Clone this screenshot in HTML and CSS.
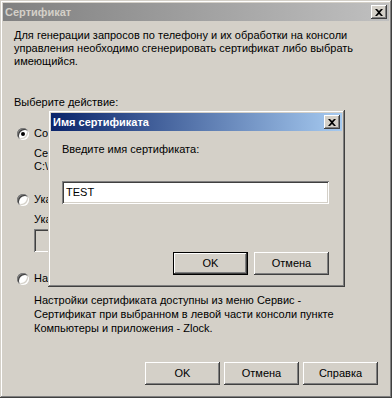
FILE: index.html
```html
<!DOCTYPE html>
<html lang="ru">
  <head>
    <meta charset="UTF-8" />
    <title>Сертификат</title>
    <link rel="stylesheet" href="styles.css">
  </head>
  <body>
    <div class="window">
      <div class="titlebar inactive">
        <span class="title">Сертификат</span>
        <span class="close-btn" aria-label="Закрыть">
          <svg width="8" height="7" viewBox="0 0 8 7"><path d="M0 0h2l2 2 2-2h2L5 3.5 8 7H6L4 5 2 7H0l3-3.5z" fill="#000"/></svg>
        </span>
      </div>
      <div class="content">
        <p class="intro">Для генерации запросов по телефону и их обработки на консоли<br>управления необходимо сгенерировать сертификат либо выбрать<br>имеющийся.</p>
        <p class="prompt">Выберите действие:</p>

        <div class="option">
          <div class="radio-row"><span class="radio checked"></span>Создать новый сертификат</div>
          <div class="option-body">
            Сертификат будет сохранён в файл<br>C:\WINDOWS\system32\zlock.cer
          </div>
        </div>

        <div class="option">
          <div class="radio-row"><span class="radio"></span>Указать существующий сертификат</div>
          <div class="option-body">
            Укажите путь к файлу сертификата:
            <div class="field disabled"></div>
          </div>
        </div>

        <div class="option last">
          <div class="radio-row"><span class="radio"></span>Настроить сертификат позже</div>
          <div class="option-body">
            Настройки сертификата доступны из меню Сервис -<br>Сертификат при выбранном в левой части консоли пункте<br>Компьютеры и приложения - Zlock.
          </div>
        </div>
      </div>
      <div class="buttons">
        <span class="btn">OK</span>
        <span class="btn">Отмена</span>
        <span class="btn">Справка</span>
      </div>

      <!-- модальное окно поверх -->
      <div class="dialog">
        <div class="titlebar active">
          <span class="title">Имя сертификата</span>
          <span class="close-btn" aria-label="Закрыть">
            <svg width="8" height="7" viewBox="0 0 8 7"><path d="M0 0h2l2 2 2-2h2L5 3.5 8 7H6L4 5 2 7H0l3-3.5z" fill="#000"/></svg>
          </span>
        </div>
        <div class="dialog-body">
          <div class="label">Введите имя сертификата:</div>
          <div class="field">TEST</div>
          <div class="buttons">
            <span class="btn default">OK</span>
            <span class="btn">Отмена</span>
          </div>
        </div>
      </div>
    </div>
  </body>
</html>
```

FILE: styles.css
```css
html,
body {
  margin: 0;
  background: #d4d0c8;
}

body {
  font-family: "Liberation Sans", Arial, sans-serif;
  font-size: 11px;
  line-height: 13px;
  color: #000;
}

/* классическая рамка окна */
.window,
.dialog {
  background: #d4d0c8;
  box-sizing: border-box;
  padding: 3px;
  box-shadow:
    inset -1px -1px #404040,
    inset 1px 1px #d4d0c8,
    inset -2px -2px #808080,
    inset 2px 2px #ffffff;
  display: flex;
  flex-direction: column;
}

.window {
  width: 392px;
  height: 398px;
  position: relative;
}

.titlebar {
  height: 18px;
  display: flex;
  align-items: center;
  justify-content: space-between;
  padding: 0 2px 0 2px;
  font-weight: bold;
  flex-shrink: 0;
}

.titlebar.inactive {
  background: linear-gradient(to right, #808080, #c0c0c0);
  color: #d4d0c8;
}

.titlebar.active {
  background: linear-gradient(to right, #0a246a, #a6caf0);
  color: #ffffff;
}

.close-btn {
  width: 16px;
  height: 14px;
  box-sizing: border-box;
  background: #d4d0c8;
  display: flex;
  align-items: center;
  justify-content: center;
  box-shadow:
    inset -1px -1px #404040,
    inset 1px 1px #ffffff,
    inset -2px -2px #808080;
}

.content {
  flex: 1;
  padding: 8px 11px 0 11px;
}

p {
  margin: 0;
}

.intro {
  margin-bottom: 28px;
}

.prompt {
  margin-bottom: 18px;
}

.radio-row {
  display: flex;
  align-items: center;
  gap: 5px;
  padding-left: 3px;
}

.radio {
  width: 12px;
  height: 12px;
  border-radius: 50%;
  background: #ffffff;
  box-shadow:
    inset 1px 1px #808080,
    inset -1px -1px #ffffff,
    inset 2px 2px #404040,
    inset -2px -2px #d4d0c8;
  position: relative;
  flex-shrink: 0;
}

.radio.checked::after {
  content: "";
  position: absolute;
  left: 4px;
  top: 4px;
  width: 4px;
  height: 4px;
  border-radius: 50%;
  background: #000;
}

.option {
  margin-bottom: 20px;
}

.option.last {
  margin-bottom: 0;
}

.option-body {
  padding-left: 20px;
  margin-top: 7px;
}

.option.last .option-body {
  margin-top: 8px;
  line-height: 14px;
}

.field {
  height: 23px;
  box-sizing: border-box;
  background: #ffffff;
  padding: 5px 4px;
  box-shadow:
    inset 1px 1px #808080,
    inset -1px -1px #ffffff,
    inset 2px 2px #404040,
    inset -2px -2px #d4d0c8;
}

.field.disabled {
  background: #d4d0c8;
  width: 290px;
  margin-top: 3px;
}

.buttons {
  display: flex;
  justify-content: flex-end;
  gap: 4px;
  padding: 0 11px 10px 0;
}

.btn {
  width: 75px;
  height: 23px;
  box-sizing: border-box;
  display: flex;
  align-items: center;
  justify-content: center;
  background: #d4d0c8;
  box-shadow:
    inset -1px -1px #404040,
    inset 1px 1px #ffffff,
    inset -2px -2px #808080;
}

.btn.default {
  border: 1px solid #000;
}

/* окно ввода имени */
.dialog {
  position: absolute;
  left: 48px;
  top: 110px;
  width: 297px;
  height: 177px;
}

.dialog-body {
  padding: 12px 13px 0 11px;
}

.dialog-body .field {
  margin-top: 25px;
}

.dialog-body .buttons {
  margin-top: 48px;
  padding: 0;
  gap: 6px;
}
```
